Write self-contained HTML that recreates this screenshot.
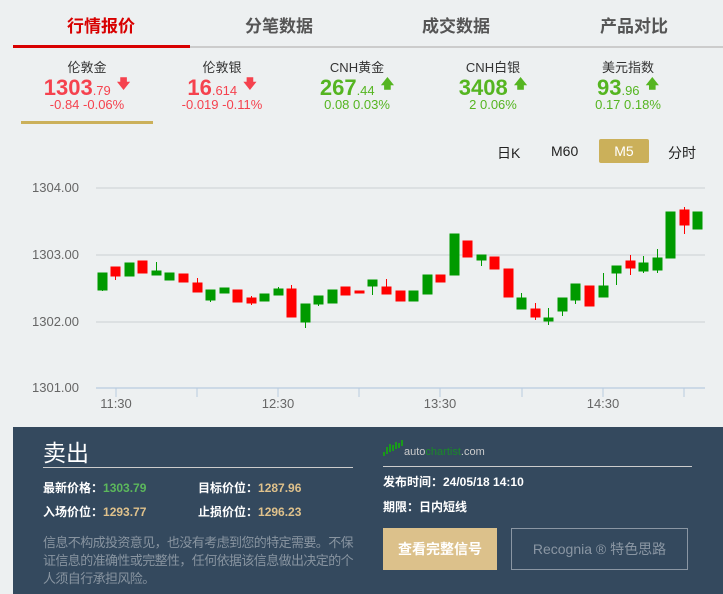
<!DOCTYPE html>
<html><head><meta charset="utf-8"><style>
*{margin:0;padding:0;box-sizing:border-box}
body{width:723px;height:594px;background:#edf0f1;font-family:"Liberation Sans","Noto Sans CJK SC",sans-serif;position:relative;overflow:hidden}
.a{position:absolute;white-space:nowrap}
.tab{top:12px;font-size:17px;font-weight:bold;color:#555;transform:translateX(-50%)}
.q{transform:translateX(-50%);text-align:center;line-height:1}
.nm{top:61px;font-size:13px;color:#333}
.pr{top:77px;font-size:22px;font-weight:bold}
.pr small{font-size:13px;font-weight:normal}
.ch{top:98px;font-size:13px}
.r{color:#f5424e}.g{color:#55b521}
.arr{font-size:13px;vertical-align:top;position:relative;top:0px}
.p{color:#fff;font-size:12px;font-weight:bold}
</style></head><body>
<div class="a tab" style="left:101px;color:#d80000">行情报价</div>
<div class="a tab" style="left:279px">分笔数据</div>
<div class="a tab" style="left:456px">成交数据</div>
<div class="a tab" style="left:634px">产品对比</div>
<div class="a" style="left:13px;top:45px;width:177px;height:3px;background:#d80000"></div>
<div class="a" style="left:190px;top:46px;width:533px;height:2px;background:#ccc"></div>

<div class="a q nm" style="left:87px">伦敦金</div>
<div class="a q pr r" style="left:87px">1303<small>.79</small> <span class="arr">🡇</span></div>
<div class="a q ch r" style="left:87px">-0.84 -0.06%</div>
<div class="a q nm" style="left:222px">伦敦银</div>
<div class="a q pr r" style="left:222px">16<small>.614</small> <span class="arr">🡇</span></div>
<div class="a q ch r" style="left:222px">-0.019 -0.11%</div>
<div class="a q nm" style="left:357px">CNH黄金</div>
<div class="a q pr g" style="left:357px">267<small>.44</small> <span class="arr">🡅</span></div>
<div class="a q ch g" style="left:357px">0.08 0.03%</div>
<div class="a q nm" style="left:493px">CNH白银</div>
<div class="a q pr g" style="left:493px">3408 <span class="arr">🡅</span></div>
<div class="a q ch g" style="left:493px">2 0.06%</div>
<div class="a q nm" style="left:628px">美元指数</div>
<div class="a q pr g" style="left:628px">93<small>.96</small> <span class="arr">🡅</span></div>
<div class="a q ch g" style="left:628px">0.17 0.18%</div>
<div class="a" style="left:21px;top:121px;width:132px;height:3px;background:#cbb05a"></div>

<div class="a" style="left:497px;top:143px;font-size:14px;color:#222">日K</div>
<div class="a" style="left:551px;top:143px;font-size:14px;color:#222">M60</div>
<div class="a" style="left:599px;top:139px;width:50px;height:24px;background:#cbb05a;border-radius:2px;color:#fff;font-size:14px;text-align:center;line-height:24px">M5</div>
<div class="a" style="left:668px;top:143px;font-size:14px;color:#222">分时</div>

<svg class="a" style="left:0;top:0" width="723" height="425">
<g stroke="#d3d6d9" stroke-width="1.3">
<line x1="96" y1="188" x2="705" y2="188"/><line x1="96" y1="255" x2="705" y2="255"/><line x1="96" y1="322" x2="705" y2="322"/></g>
<line x1="96" y1="388" x2="705" y2="388" stroke="#b9cbe0" stroke-width="1.3"/>
<g stroke="#b9cbe0"><line x1="116" y1="388" x2="116" y2="397"/><line x1="197" y1="388" x2="197" y2="397"/><line x1="278" y1="388" x2="278" y2="397"/><line x1="359" y1="388" x2="359" y2="397"/><line x1="440" y1="388" x2="440" y2="397"/><line x1="522" y1="388" x2="522" y2="397"/><line x1="603" y1="388" x2="603" y2="397"/><line x1="684" y1="388" x2="684" y2="397"/></g>
<g font-size="13" fill="#666" font-family="Liberation Sans,sans-serif">
<text x="32" y="192">1304.00</text><text x="32" y="259">1303.00</text><text x="32" y="326">1302.00</text><text x="32" y="392">1301.00</text>
<text x="116" y="408" text-anchor="middle">11:30</text><text x="278" y="408" text-anchor="middle">12:30</text><text x="440" y="408" text-anchor="middle">13:30</text><text x="603" y="408" text-anchor="middle">14:30</text></g>
<g fill="#009a00" stroke="#009a00">
<rect x="98" y="273" width="9" height="17"/><line x1="102.5" y1="290" x2="102.5" y2="291"/>
<rect x="125" y="263" width="9" height="13"/>
<rect x="152" y="271" width="9" height="4"/><line x1="156.5" y1="262" x2="156.5" y2="271"/>
<rect x="165" y="273" width="9" height="7"/>
<rect x="206" y="290" width="9" height="10"/><line x1="210.5" y1="300" x2="210.5" y2="302"/>
<rect x="220" y="288" width="9" height="5"/>
<rect x="260" y="294" width="9" height="7"/>
<rect x="274" y="289" width="9" height="6"/><line x1="278.5" y1="287" x2="278.5" y2="289"/>
<rect x="301" y="304" width="9" height="18"/><line x1="305.5" y1="322" x2="305.5" y2="328"/>
<rect x="314" y="296" width="9" height="8"/><line x1="318.5" y1="304" x2="318.5" y2="306"/>
<rect x="328" y="290" width="9" height="13"/>
<rect x="368" y="280" width="9" height="6"/><line x1="372.5" y1="286" x2="372.5" y2="295"/>
<rect x="409" y="291" width="9" height="10"/>
<rect x="423" y="275" width="9" height="19"/>
<rect x="450" y="234" width="9" height="41"/>
<rect x="477" y="255" width="9" height="5"/><line x1="481.5" y1="260" x2="481.5" y2="266"/>
<rect x="517" y="298" width="9" height="11"/><line x1="521.5" y1="293" x2="521.5" y2="298"/>
<rect x="544" y="318" width="9" height="3"/><line x1="548.5" y1="308" x2="548.5" y2="325"/>
<rect x="558" y="298" width="9" height="13"/><line x1="562.5" y1="311" x2="562.5" y2="316"/>
<rect x="571" y="284" width="9" height="16"/><line x1="575.5" y1="300" x2="575.5" y2="304"/>
<rect x="599" y="286" width="9" height="11"/><line x1="603.5" y1="273" x2="603.5" y2="286"/>
<rect x="612" y="266" width="9" height="7"/><line x1="616.5" y1="273" x2="616.5" y2="285"/>
<rect x="639" y="263" width="9" height="8"/><line x1="643.5" y1="256" x2="643.5" y2="273"/>
<rect x="653" y="258" width="9" height="12"/><line x1="657.5" y1="249" x2="657.5" y2="273"/>
<rect x="666" y="212" width="9" height="46"/>
<rect x="693" y="212" width="9" height="17"/>
</g>
<g fill="#ff0000" stroke="#ff0000">
<rect x="111" y="267" width="9" height="9"/><line x1="115.5" y1="276" x2="115.5" y2="280"/>
<rect x="138" y="261" width="9" height="12"/>
<rect x="179" y="274" width="9" height="8"/>
<rect x="193" y="283" width="9" height="9"/><line x1="197.5" y1="278" x2="197.5" y2="283"/>
<rect x="233" y="290" width="9" height="12"/>
<rect x="247" y="298" width="9" height="5"/><line x1="251.5" y1="296" x2="251.5" y2="305"/>
<rect x="287" y="289" width="9" height="28"/><line x1="291.5" y1="285" x2="291.5" y2="289"/>
<rect x="341" y="287" width="9" height="8"/>
<rect x="355" y="291" width="9" height="2"/>
<rect x="382" y="287" width="9" height="7"/><line x1="386.5" y1="279" x2="386.5" y2="287"/>
<rect x="396" y="291" width="9" height="10"/>
<rect x="436" y="275" width="9" height="7"/>
<rect x="463" y="241" width="9" height="16"/>
<rect x="490" y="257" width="9" height="12"/>
<rect x="504" y="269" width="9" height="28"/>
<rect x="531" y="309" width="9" height="8"/><line x1="535.5" y1="303" x2="535.5" y2="320"/>
<rect x="585" y="286" width="9" height="20"/>
<rect x="626" y="261" width="9" height="7"/><line x1="630.5" y1="255" x2="630.5" y2="275"/>
<rect x="680" y="210" width="9" height="15"/><line x1="684.5" y1="207" x2="684.5" y2="234"/>
</g>
</svg>

<div class="a" style="left:13px;top:427px;width:710px;height:167px;background:#34495e"></div>
<div class="a" style="left:43px;top:434px;font-size:23px;color:#fff">卖出</div>
<div class="a" style="left:43px;top:467px;width:310px;height:1px;background:#ccc"></div>
<div class="a p" style="left:43px;top:479px">最新价格：<span style="color:#5cb85c">1303.79</span></div>
<div class="a p" style="left:198px;top:479px">目标价位：<span style="color:#dfc18b">1287.96</span></div>
<div class="a p" style="left:43px;top:503px">入场价位：<span style="color:#dfc18b">1293.77</span></div>
<div class="a p" style="left:198px;top:503px">止损价位：<span style="color:#dfc18b">1296.23</span></div>
<div class="a" style="left:43px;top:534px;font-size:13px;line-height:18px;color:#8894a0;letter-spacing:-0.6px">信息不构成投资意见，也没有考虑到您的特定需要。不保<br>证信息的准确性或完整性，任何依据该信息做出决定的个<br>人须自行承担风险。</div>

<svg class="a" style="left:383px;top:438px" width="140" height="20">
<g fill="#1a9a1a"><rect x="0" y="14" width="2" height="4"/><rect x="3" y="9" width="2" height="7"/><rect x="6" y="6" width="2" height="8"/><rect x="9" y="7" width="2" height="6"/><rect x="12" y="4" width="2" height="7"/><rect x="15" y="5" width="2" height="5"/><rect x="18" y="2" width="2" height="6"/></g>
<text x="21" y="17" font-size="11" fill="#ccc" font-family="Liberation Sans,sans-serif">auto<tspan fill="#1a8a2a">chartist</tspan>.com</text>
</svg>
<div class="a" style="left:383px;top:466px;width:309px;height:1px;background:#ccc"></div>
<div class="a p" style="left:383px;top:473px">发布时间：24/05/18 14:10</div>
<div class="a p" style="left:383px;top:498px">期限：日内短线</div>
<div class="a" style="left:383px;top:528px;width:114px;height:42px;background:#dcc18b;color:#fff;font-size:14px;font-weight:bold;text-align:center;line-height:42px">查看完整信号</div>
<div class="a" style="left:511px;top:528px;width:177px;height:42px;border:1px solid #8a96a3;color:#8a96a3;font-size:14px;text-align:center;line-height:40px">Recognia ® 特色思路</div>
</body></html>
